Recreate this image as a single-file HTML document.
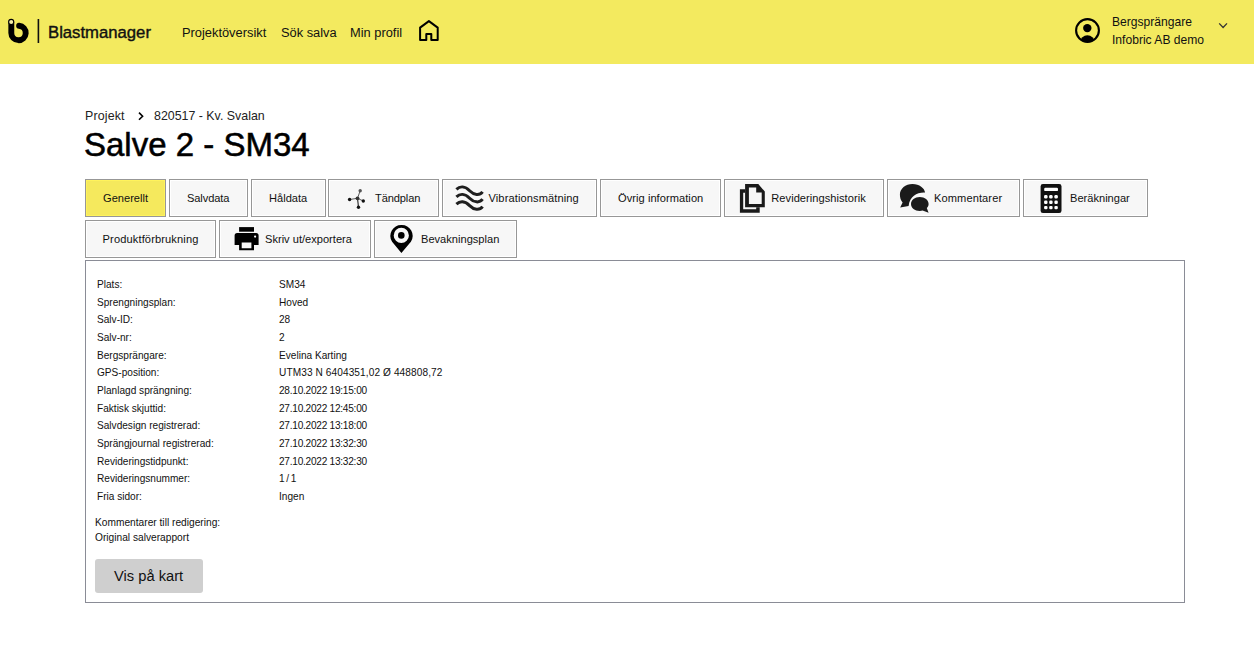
<!DOCTYPE html>
<html><head><meta charset="utf-8">
<style>
*{margin:0;padding:0;box-sizing:border-box}
html,body{width:1254px;height:666px;overflow:hidden;background:#fff;font-family:"Liberation Sans",sans-serif;color:#111}
.t{position:absolute;white-space:nowrap;line-height:1}
#hdr{position:absolute;left:0;top:0;width:1254px;height:64px;background:#f3ea5f}
.nav{font-size:12.85px;color:#111}
.tab{position:absolute;height:38px;border:1px solid #979797;background:#f7f7f7;box-shadow:inset 0 0 0 1px #fff}
.tt{font-size:11.1px;color:#111}
#content{position:absolute;left:85px;top:260px;width:1100px;height:343px;border:1px solid #8a8c96}
.lb{position:absolute;left:97px;font-size:10.1px;color:#111;white-space:nowrap;line-height:1}
.dt{letter-spacing:-0.25px}
.vl{position:absolute;left:279px;font-size:10.1px;color:#111;white-space:nowrap;line-height:1}
svg{position:absolute;overflow:visible}
</style></head><body>
<div id="hdr"></div>
<!-- logo -->
<svg style="left:0;top:0" width="60" height="60" viewBox="0 0 60 60">
  <path d="M11.3 22.5 V33 A7.2 7.2 0 1 0 19.1 25.8" fill="none" stroke="#000" stroke-width="5.9" stroke-linecap="round"/>
  <circle cx="11.2" cy="21.9" r="2.55" fill="#f5efa8" stroke="#000" stroke-width="1.05"/>
  <rect x="37.6" y="19" width="1.6" height="24" fill="#111"/>
</svg>
<div class="t" style="left:48px;top:25.3px;font-size:16.7px;color:#111;-webkit-text-stroke:0.4px #111">Blastmanager</div>
<div class="t nav" style="left:182px;top:26.8px">Projektöversikt</div>
<div class="t nav" style="left:281px;top:26.8px">Sök salva</div>
<div class="t nav" style="left:350px;top:26.8px">Min profil</div>
<svg style="left:0;top:0" width="450" height="60" viewBox="0 0 450 60">
  <path d="M420.1 27.6 L428.9 21.1 L437.7 27.6 V39.9 H431.3 V33.9 H426.3 V39.9 H420.1 Z" fill="none" stroke="#000" stroke-width="2" stroke-linejoin="round"/>
</svg>
<svg style="left:0;top:0" width="1254" height="64" viewBox="0 0 1254 64">
  <circle cx="1087.5" cy="30.5" r="11.4" fill="none" stroke="#000" stroke-width="2.1"/>
  <circle cx="1087.3" cy="28.1" r="4.2" fill="#000"/>
  <clipPath id="uc"><circle cx="1087.5" cy="30.5" r="11"/></clipPath><circle cx="1087.4" cy="42.3" r="7.1" fill="#000" clip-path="url(#uc)"/>
  <path d="M1219.2 23.4 L1223.1 27.5 L1227 23.4" fill="none" stroke="#333" stroke-width="1.3"/>
</svg>
<div class="t" style="left:1112px;top:16px;font-size:12.1px;color:#111">Bergsprängare</div>
<div class="t" style="left:1112px;top:34px;font-size:12.1px;color:#111">Infobric AB demo</div>

<div class="t" style="left:85px;top:110px;font-size:12.4px;color:#222;letter-spacing:0.15px">Projekt</div>
<svg style="left:0;top:0" width="200" height="130" viewBox="0 0 200 130">
  <path d="M139 112.6 L142.6 116.2 L139 119.8" fill="none" stroke="#000" stroke-width="1.6"/>
</svg>
<div class="t" style="left:154px;top:110px;font-size:12.4px;color:#222">820517 - Kv. Svalan</div>
<div class="t" style="left:84px;top:127.5px;font-size:33px;color:#000;-webkit-text-stroke:0.55px #000">Salve 2 - SM34</div>

<div class="tab" style="left:85px;top:179px;width:81px;background:#f5e95d;box-shadow:inset 0 0 0 1px #fff35c"></div>
<div class="tab" style="left:169px;top:179px;width:79px"></div>
<div class="tab" style="left:251px;top:179px;width:75px"></div>
<div class="tab" style="left:328px;top:179px;width:111px"></div>
<div class="tab" style="left:442px;top:179px;width:155px"></div>
<div class="tab" style="left:600px;top:179px;width:121px"></div>
<div class="tab" style="left:724px;top:179px;width:160px"></div>
<div class="tab" style="left:887px;top:179px;width:133px"></div>
<div class="tab" style="left:1023px;top:179px;width:125px"></div>
<div class="tab" style="left:85px;top:220px;width:131px"></div>
<div class="tab" style="left:219px;top:220px;width:152px"></div>
<div class="tab" style="left:374px;top:220px;width:143px"></div>

<div class="t tt" style="left:103px;top:193px">Generellt</div>
<div class="t tt" style="left:187px;top:193px;letter-spacing:-0.11px">Salvdata</div>
<div class="t tt" style="left:269px;top:193px">Håldata</div>
<div class="t tt" style="left:375px;top:193px;letter-spacing:-0.12px">Tändplan</div>
<div class="t tt" style="left:488.5px;top:193px;letter-spacing:0.1px">Vibrationsmätning</div>
<div class="t tt" style="left:618px;top:193px;letter-spacing:0.05px">Övrig information</div>
<div class="t tt" style="left:771.3px;top:193px;letter-spacing:0.04px">Revideringshistorik</div>
<div class="t tt" style="left:934px;top:193px;letter-spacing:0.09px">Kommentarer</div>
<div class="t tt" style="left:1070px;top:193px">Beräkningar</div>
<div class="t tt" style="left:102.6px;top:234px;letter-spacing:0.12px">Produktförbrukning</div>
<div class="t tt" style="left:265px;top:234px">Skriv ut/exportera</div>
<div class="t tt" style="left:421px;top:234px">Bevakningsplan</div>

<!-- icons -->
<svg style="left:0;top:0" width="1254" height="260" viewBox="0 0 1254 260">
  <!-- tandplan -->
  <g stroke="#333" fill="none">
    <line x1="357.5" y1="198.3" x2="360.2" y2="190.7" stroke-width="0.8"/>
    <line x1="357.5" y1="198.3" x2="349.6" y2="199.5" stroke-width="0.8"/>
    <line x1="357.5" y1="198.3" x2="363.3" y2="201" stroke-width="0.8"/>
    <line x1="357.5" y1="198.3" x2="358.5" y2="207.2" stroke-width="1.2"/>
  </g>
  <circle cx="360.2" cy="190.7" r="1.7" fill="#555"/>
  <circle cx="357.5" cy="198.3" r="1.9" fill="#333"/>
  <circle cx="349.6" cy="199.5" r="1.7" fill="#111"/>
  <circle cx="363.3" cy="201" r="1.7" fill="#111"/>
  <circle cx="358.5" cy="207.2" r="1.7" fill="#111"/>
  <!-- waves -->
  <g fill="none" stroke="#1e1e1e" stroke-width="3" stroke-linecap="butt">
    <path transform="translate(0 0)" d="M456.4 189.4 C460 186, 465 186, 469.6 190.8 C474 195.2, 479.5 195.8, 482.6 191.8"/>
    <path transform="translate(0 7.4)" d="M456.4 189.4 C460 186, 465 186, 469.6 190.8 C474 195.2, 479.5 195.8, 482.6 191.8"/>
    <path transform="translate(0 14.8)" d="M456.4 189.4 C460 186, 465 186, 469.6 190.8 C474 195.2, 479.5 195.8, 482.6 191.8"/>
  </g>
  <!-- docs -->
  <g fill="#1a1a1a">
    <path d="M739.9 189.2 H745.1 V192.7 H743.2 V209.2 H756.2 V207.3 H759.7 V212.7 H739.9 Z"/>
    <path d="M745.1 184 H758.3 L764.8 191.6 V207.3 H745.1 Z M748.9 187.6 V204 H761.7 V192.4 H756.2 V187.6 Z"/>
  </g>
  <!-- comments -->
  <path d="M912.5 184.1 C919.5 184.1 924.5 188.3 925.1 192.6 C917 192.2 910 196 908.6 206 L900.2 207.6 L902.6 202.5 C900.8 200.5 899.9 197.6 899.9 194.8 C899.9 188.7 905.5 184.1 912.5 184.1 Z" fill="#1a1a1a"/>
  <path d="M919.8 197 C924.8 197 928.6 200.1 928.6 203.9 C928.6 205.5 927.9 207 926.8 208.1 L928.6 212.7 L922.6 210.6 C921.7 210.8 920.8 210.9 919.8 210.9 C914.8 210.9 911 207.8 911 203.9 C911 200.1 914.8 197 919.8 197 Z" fill="#1a1a1a"/>
  <!-- calculator -->
  <rect x="1040.6" y="184.1" width="20.9" height="28.9" rx="2.3" fill="#111"/>
  <rect x="1044.2" y="187.8" width="13.8" height="3.3" rx="1.2" fill="#fff"/>
  <g fill="#fff">
    <rect x="1044.1" y="195.1" width="3.4" height="3.4" rx="1.2"/>
    <rect x="1049.2" y="195.1" width="3.4" height="3.4" rx="1.2"/>
    <rect x="1054.4" y="195.1" width="3.4" height="3.4" rx="1.2"/>
    <rect x="1044.1" y="200.5" width="3.4" height="3.4" rx="1.2"/>
    <rect x="1049.2" y="200.5" width="3.4" height="3.4" rx="1.2"/>
    <rect x="1054.4" y="200.5" width="3.4" height="3.4" rx="1.2"/>
    <rect x="1044.1" y="205.9" width="3.4" height="3.4" rx="1.2"/>
    <rect x="1049.2" y="205.9" width="3.4" height="3.4" rx="1.2"/>
    <rect x="1054.4" y="205.9" width="3.4" height="3.4" rx="1.2"/>
  </g>
  <!-- printer -->
  <rect x="239.1" y="227.1" width="14.9" height="4.6" fill="#000"/>
  <path d="M237.1 233.1 H256.1 A2.5 2.5 0 0 1 258.6 235.6 V244.9 H254 V250.3 H239.1 V244.9 H234.6 V235.6 A2.5 2.5 0 0 1 237.1 233.1 Z M241.7 242.6 V248.3 H251.4 V242.6 Z" fill="#000"/>
  <circle cx="255.1" cy="236.6" r="1.1" fill="#fff"/>
  <!-- pin -->
  <path d="M401.6 224.9 A11 11 0 0 1 410.9 241.8 L401.4 252.9 L392.1 241.8 A11 11 0 0 1 401.6 224.9 Z M401.3 227.8 A7.6 7.6 0 1 0 401.3 243 A7.6 7.6 0 1 0 401.3 227.8 Z" fill="#000" fill-rule="evenodd"/>
  <circle cx="401.3" cy="235.4" r="3.3" fill="#000"/>
</svg>

<div id="content"></div>
<div class="lb" style="top:280.00px">Plats:</div><div class="vl" style="top:280.00px">SM34</div>
<div class="lb" style="top:297.67px">Sprengningsplan:</div><div class="vl" style="top:297.67px">Hoved</div>
<div class="lb" style="top:315.34px">Salv-ID:</div><div class="vl" style="top:315.34px">28</div>
<div class="lb" style="top:333.01px">Salv-nr:</div><div class="vl" style="top:333.01px">2</div>
<div class="lb" style="top:350.68px">Bergsprängare:</div><div class="vl" style="top:350.68px">Evelina Karting</div>
<div class="lb" style="top:368.35px">GPS-position:</div><div class="vl" style="top:368.35px;letter-spacing:0.1px">UTM33 N 6404351,02 Ø 448808,72</div>
<div class="lb" style="top:386.02px">Planlagd sprängning:</div><div class="vl dt" style="top:386.02px">28.10.2022 19:15:00</div>
<div class="lb" style="top:403.69px">Faktisk skjuttid:</div><div class="vl dt" style="top:403.69px">27.10.2022 12:45:00</div>
<div class="lb" style="top:421.36px">Salvdesign registrerad:</div><div class="vl dt" style="top:421.36px">27.10.2022 13:18:00</div>
<div class="lb" style="top:439.03px">Sprängjournal registrerad:</div><div class="vl dt" style="top:439.03px">27.10.2022 13:32:30</div>
<div class="lb" style="top:456.70px">Revideringstidpunkt:</div><div class="vl dt" style="top:456.70px">27.10.2022 13:32:30</div>
<div class="lb" style="top:474.37px">Revideringsnummer:</div><div class="vl" style="top:474.37px;letter-spacing:-0.6px">1 / 1</div>
<div class="lb" style="top:492.04px">Fria sidor:</div><div class="vl" style="top:492.04px">Ingen</div>
<div class="t" style="left:95px;top:518px;font-size:10.2px;color:#111">Kommentarer till redigering:</div>
<div class="t" style="left:95px;top:533px;font-size:10.2px;color:#111">Original salverapport</div>
<div style="position:absolute;left:95px;top:559px;width:108px;height:34px;background:#cfcfcf;border-radius:3px"></div>
<div class="t" style="left:114px;top:569px;font-size:14.7px;color:#111">Vis på kart</div>
</body></html>
